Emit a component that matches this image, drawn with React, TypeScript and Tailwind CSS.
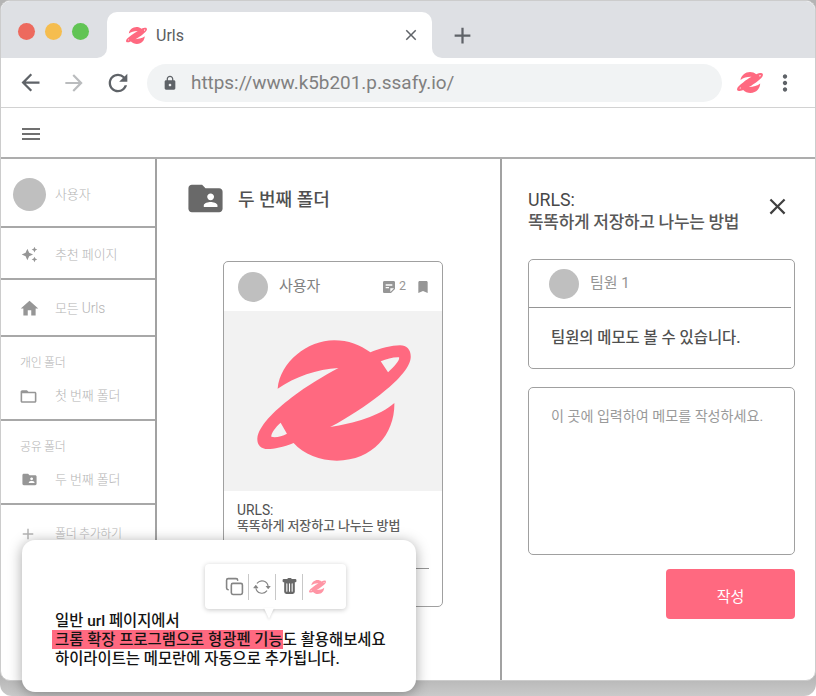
import React from "react";
import {
  MdAdd,
  MdArrowBack,
  MdArrowForward,
  MdAutoAwesome,
  MdBookmark,
  MdClose,
  MdFolderOpen,
  MdFolderShared,
  MdHome,
  MdLock,
  MdMenu,
  MdMoreVert,
  MdRefresh,
  MdStickyNote2,
} from "react-icons/md";
import { BsArrowRepeat, BsTrashFill } from "react-icons/bs";
import { Copy } from "lucide-react";

function Logo({ className }: { className: string }) {
  return (
    <svg viewBox="110 90 463 363" preserveAspectRatio="none" fill="#ff6980" fillRule="evenodd" className={className}>
      <path d="M172 236C180 156 262 91 342 91C385 91 420 105 451 127C480 115 515 106 540 106C562 106 574 122 572 144C569 174 530 216 480 254C436 288 385 322 330 351C400 340 480 318 523 279C525 370 460 452 350 452C300 452 250 432 220 399C190 411 160 417 143 417C120 417 110 403 111 385C114 350 160 304 215 262C262 226 310 198 355 174C290 178 225 200 172 236ZM482 154C500 147 520 141 537 142C540 150 525 168 504 187ZM181 338L200 371C185 379 165 384 153 380C152 370 165 352 181 338Z" />
    </svg>
  );
}

// Small-size cut of the mark: wider notches and smaller ring openings.
function LogoMark({ className }: { className: string }) {
  return (
    <svg viewBox="110 90 463 363" preserveAspectRatio="none" fill="#ff6980" fillRule="evenodd" className={className}>
      <path d="M172 228C184 150 262 91 342 91C385 91 420 105 451 127C480 115 515 106 540 106C562 106 574 122 572 144C569 174 530 212 476 248C432 280 385 314 318 351C400 346 480 326 523 290C520 374 460 452 350 452C300 452 250 432 220 399C190 411 160 417 143 417C120 417 110 403 111 385C114 350 160 310 219 270C266 236 312 206 368 174C290 172 225 192 172 228ZM503 152C515 147 528 144 536 146C536 154 528 164 516 174ZM170 352L181 369C172 374 162 377 156 375C155 368 162 359 170 352Z" />
    </svg>
  );
}

function TabStrip() {
  return (
    <div className="flex h-[57px] shrink-0 bg-white">
      <div className="flex w-[106px] items-start gap-[11px] rounded-br-[10px] bg-[#dee0e4] pl-[17px] pt-[22px]">
        <span className="size-[17px] rounded-full bg-[#ed6a5e]" />
        <span className="-ml-px size-[17px] rounded-full bg-[#f5bd4f]" />
        <span className="-ml-px size-[17px] rounded-full bg-[#61c454]" />
      </div>
      <div className="w-[325px] bg-[#dee0e4] pt-[11px]">
        <div className="flex h-full items-center rounded-t-[10px] bg-white pl-[19px] pr-[12px]">
          <LogoMark className="h-[17px] w-[21px]" />
          <span className="ml-[9px] grow pt-px text-[16px] leading-5 text-[#5a5d61]">Urls</span>
          <MdClose className="size-[18px] text-[#5f6368]" />
        </div>
      </div>
      <div className="grow rounded-bl-[10px] bg-[#dee0e4] pl-[17px] pt-[21px]">
        <MdAdd className="size-[27px] text-[#5f6368]" />
      </div>
    </div>
  );
}

function Toolbar() {
  return (
    <div className="flex h-[50px] shrink-0 items-center border-b border-[#d2d2d2] bg-white pl-[16px]">
      <MdArrowBack className="size-[27px] text-[#5f6368]" />
      <MdArrowForward className="ml-[17px] size-[26px] text-[#babcbe]" />
      <MdRefresh className="ml-[17px] size-[28px] text-[#5f6368]" />
      <div className="ml-[15px] flex h-[38px] w-[575px] items-center rounded-full bg-[#f1f3f4] pl-[15px]">
        <MdLock className="size-4 text-[#5f6368]" />
        <span className="ml-[13px] pt-[2px] text-[18.9px] text-[#808080]">https://www.k5b201.p.ssafy.io/</span>
      </div>
      <LogoMark className="ml-[15px] h-[21px] w-[26px]" />
      <MdMoreVert className="ml-[9px] size-[26px] text-[#5f6368]" />
    </div>
  );
}

function Sidebar() {
  return (
    <aside className="flex w-[156px] shrink-0 flex-col border-r-2 border-[#a2a2a2] text-[13px] font-light tracking-[-0.1px] text-[#b4b4b4]">
      <div className="flex h-[69px] shrink-0 items-center border-b-2 border-[#a8a8a8] pl-3 pt-1">
        <span className="size-[33px] rounded-full bg-[#bfbfbf]" />
        <span className="ml-[9px]">사용자</span>
      </div>
      <div className="flex h-[52px] shrink-0 items-center border-b-2 border-[#a8a8a8] pl-5 pt-[2px]">
        <MdAutoAwesome className="size-[17px] text-[#969696]" />
        <span className="ml-[17px] pt-[2px]">추천 페이지</span>
      </div>
      <div className="flex h-[57px] shrink-0 items-center border-b-2 border-[#a8a8a8] pl-[18px] pt-[2px]">
        <MdHome className="size-[21px] text-[#969696]" />
        <span className="ml-[15px]">
          모든 <span className="text-[13.8px]">Urls</span>
        </span>
      </div>
      <div className="flex h-[84px] shrink-0 flex-col border-b-2 border-[#a8a8a8] pt-4">
        <span className="pl-[19px] text-[12px] leading-5 tracking-[-0.3px]">개인 폴더</span>
        <div className="mt-[13px] flex h-5 items-center pl-[18px]">
          <MdFolderOpen className="size-[19px] text-[#969696]" />
          <span className="ml-[17px]">첫 번째 폴더</span>
        </div>
      </div>
      <div className="flex h-[84px] shrink-0 flex-col border-b-2 border-[#a8a8a8] pt-4">
        <span className="pl-[19px] text-[12px] leading-5 tracking-[-0.3px]">공유 폴더</span>
        <div className="mt-[13px] flex h-5 items-center pl-5">
          <MdFolderShared className="mb-px size-[17px] text-[#969696]" />
          <span className="ml-[17px]">두 번째 폴더</span>
        </div>
      </div>
      <div className="flex h-[58px] items-center pl-[18px]">
        <MdAdd className="size-[18px] text-[#b4b4b4]" />
        <span className="ml-[18px] text-[12px] tracking-[-0.35px]">폴더 추가하기</span>
      </div>
    </aside>
  );
}

function FolderView() {
  return (
    <main className="flex w-[345px] shrink-0 flex-col border-r-2 border-[#a2a2a2]">
      <div className="flex h-[80px] items-center pl-[28px]">
        <MdFolderShared className="mb-[2px] size-[41px] text-[#696969]" />
        <span className="ml-[12px] text-[18px] font-medium text-[#505050]">두 번째 폴더</span>
      </div>
      <article className="ml-[66px] mt-[22px] flex h-[346px] w-[220px] flex-col rounded-[5px] border border-[#a0a0a0]">
        <div className="flex h-[49px] shrink-0 items-center pl-[14px] pr-[11px]">
          <span className="size-[30px] rounded-full bg-[#bfbfbf]" />
          <span className="ml-[11px] grow text-[15px] text-[#808080]">사용자</span>
          <MdStickyNote2 className="size-[16px] text-[#969696]" />
          <span className="ml-[2px] mr-[9px] text-[12.5px] text-[#969696]">2</span>
          <MdBookmark className="size-[16px] text-[#969696]" />
        </div>
        <div className="flex h-[180px] shrink-0 items-start bg-[#f2f2f2] pl-[33px] pt-[29px]">
          <Logo className="h-[121px] w-[154px]" />
        </div>
        <p className="pl-[13px] pt-[11px] text-[13px] font-medium leading-[16px] tracking-[-0.12px] text-[#606060]">
          <span className="block h-4 text-[13.8px] font-normal tracking-normal text-[#505050]">URLS:</span>
          똑똑하게 저장하고 나누는 방법
        </p>
        <div className="mx-[13px] mt-[34px] border-t border-[#959595]" />
      </article>
    </main>
  );
}

function MemoPanel() {
  return (
    <section className="flex grow flex-col pl-[26px] pr-[20px] pt-[30px]">
      <div className="flex items-start">
        <h1 className="grow whitespace-nowrap text-[17px] font-medium leading-[22px] tracking-[-0.3px] text-[#585858]">
          <span className="block h-[22px] text-[17.8px] font-normal tracking-normal text-[#484848]">URLS:</span>
          똑똑하게 저장하고 나누는 방법
        </h1>
        <MdClose className="mr-[4px] mt-[4px] size-[27px] shrink-0 text-[#404040]" />
      </div>
      <div className="mt-[26px] h-[110px] rounded-[5px] border border-[#a0a0a0]">
        <div className="mr-[3px] flex h-[48px] items-center border-b border-[#959595] pl-5">
          <span className="size-[30px] rounded-full bg-[#bfbfbf]" />
          <span className="ml-[11px] text-[15px] text-[#959595]">팀원 1</span>
        </div>
        <p className="flex h-[60px] items-center pl-[22px] pt-[2px] text-[15.4px] font-medium text-[#505050]">팀원의 메모도 볼 수 있습니다.</p>
      </div>
      <div className="mt-[18px] h-[168px] rounded-[5px] border border-[#a0a0a0] pl-[22px] pt-[16px] text-[14.1px] leading-6 text-[#9a9a9a]">
        이 곳에 입력하여 메모를 작성하세요.
      </div>
      <button className="mt-[14px] flex h-[50px] w-[129px] items-center justify-center self-end rounded-[4px] bg-[#ff6980] pt-[6px] text-[15px] text-white">
        작성
      </button>
    </section>
  );
}

function HighlightDemo() {
  return (
    <div className="absolute left-[22px] top-[540px] h-[152px] w-[394px] rounded-[13px] bg-white pl-[30px] pt-6 shadow-[0_2px_14px_rgba(0,0,0,0.35)]">
      <div className="relative ml-[153px] flex h-[45px] w-[141px] items-center rounded-[4px] bg-white pl-5 shadow-[0_1px_5px_rgba(0,0,0,0.22)]">
        <Copy className="size-[19px] text-[#858585]" strokeWidth={2} />
        <span className="ml-[4px] h-[26px] w-px bg-[#c8c8c8]" />
        <BsArrowRepeat className="ml-1 size-[18px] text-[#858585]" />
        <span className="ml-1 h-[26px] w-px bg-[#c8c8c8]" />
        <BsTrashFill className="ml-[5px] size-[17px] text-[#686868]" />
        <span className="ml-1 h-[26px] w-px bg-[#c8c8c8]" />
        <LogoMark className="ml-[6px] h-[14px] w-[17px] opacity-70" />
        <svg viewBox="0 0 12 12" className="absolute left-[58px] top-[44px] size-3 drop-shadow-[0_1px_1px_rgba(0,0,0,0.15)]">
          <path d="M1 0H11L6 11Z" fill="white" />
        </svg>
      </div>
      <p className="mt-[3px] whitespace-nowrap text-[15.4px] font-medium leading-[19px] text-[#141414]">
        <span className="pl-[3px]">일반 url 페이지에서</span>
        <br />
        <span className="-mt-px inline-block h-[19px] bg-[#ff6980] pl-[3px] pt-px align-top">크롬 확장 프로그램으로 형광펜 기능</span>도 활용해보세요
        <br />
        <span className="pl-[3px]">하이라이트는 메모란에 자동으로 추가됩니다.</span>
      </p>
    </div>
  );
}

export default function App() {
  return (
    <div className="relative h-[696px] w-[816px] overflow-hidden rounded-b-[12px] bg-gradient-to-b from-[#b4b4b4] from-[97%] to-[#cacaca] font-[Roboto,'Noto_Sans_CJK_KR',sans-serif]">
      <div className="flex h-[681px] flex-col overflow-hidden rounded-[10px] border border-[#cccccc] bg-white">
        <div className="flex grow flex-col">
          <TabStrip />
          <Toolbar />
          <div className="flex h-[51px] shrink-0 items-center border-b-2 border-[#adadad] pl-[18px] pt-[2px]">
            <MdMenu className="size-6 text-[#707070]" />
          </div>
          <div className="flex grow">
            <Sidebar />
            <FolderView />
            <MemoPanel />
          </div>
        </div>
      </div>
      <HighlightDemo />
    </div>
  );
}
